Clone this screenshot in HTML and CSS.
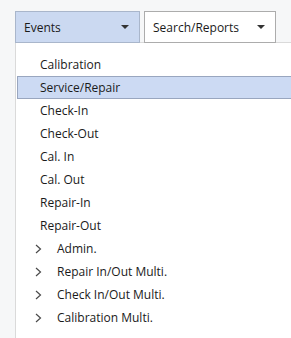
FILE: index.html
```html
<!DOCTYPE html>
<html lang="en">
<head>
    <meta charset="UTF-8">
    <title>Events Menu</title>
    <link rel="stylesheet" href="styles.css">
</head>
<body>
<div class="toolbar">
    <div class="drop drop-active">
        <span>Events</span>
        <span class="caret"></span>
    </div>
    <div class="drop drop-search">
        <span>Search/Reports</span>
        <span class="caret"></span>
    </div>
</div>
<div class="panel">
    <ul class="menu">
        <li class="item">Calibration</li>
        <li class="item selected">Service/Repair</li>
        <li class="item">Check-In</li>
        <li class="item">Check-Out</li>
        <li class="item">Cal. In</li>
        <li class="item">Cal. Out</li>
        <li class="item">Repair-In</li>
        <li class="item">Repair-Out</li>
        <li class="item group"><svg class="chev" width="7" height="10" viewBox="0 0 7 10"><polyline points="1,1 5.5,5 1,9" fill="none" stroke="#4a4a4a" stroke-width="1.2"/></svg>Admin.</li>
        <li class="item group"><svg class="chev" width="7" height="10" viewBox="0 0 7 10"><polyline points="1,1 5.5,5 1,9" fill="none" stroke="#4a4a4a" stroke-width="1.2"/></svg>Repair In/Out Multi.</li>
        <li class="item group"><svg class="chev" width="7" height="10" viewBox="0 0 7 10"><polyline points="1,1 5.5,5 1,9" fill="none" stroke="#4a4a4a" stroke-width="1.2"/></svg>Check In/Out Multi.</li>
        <li class="item group"><svg class="chev" width="7" height="10" viewBox="0 0 7 10"><polyline points="1,1 5.5,5 1,9" fill="none" stroke="#4a4a4a" stroke-width="1.2"/></svg>Calibration Multi.</li>
    </ul>
</div>
</body>
</html>
```

FILE: styles.css
```css
body, html {
    margin: 0;
    padding: 0;
    height: 100%;
    font-family: "Open Sans", "Noto Sans", sans-serif;
    font-size: 12px;
    color: #1a1a1a;
    background-color: #f6f7f8;
    overflow: hidden;
}

.toolbar {
    display: flex;
    gap: 4px;
    padding: 11px 0 0 15px;
    position: relative;
    z-index: 1;
    margin-bottom: -1px;
}

.drop {
    box-sizing: border-box;
    height: 32px;
    display: flex;
    align-items: center;
    justify-content: space-between;
    padding: 0 10px 0 8px;
    border: 1px solid #acacac;
    background-color: #fff;
}

.drop-active {
    width: 125px;
    background-color: #cbd9f1;
    border-color: #a9b6cb;
}

.drop-search {
    width: 132px;
}

.caret {
    width: 0;
    height: 0;
    border-left: 4px solid transparent;
    border-right: 4px solid transparent;
    border-top: 4px solid #333;
}

.panel {
    box-sizing: border-box;
    margin-left: 15px;
    height: calc(100% - 42px);
    background-color: #fff;
    border-left: 1px solid #dadada;
    border-top: 1px solid #dadada;
}

.menu {
    list-style: none;
    margin: 0;
    padding: 10px 0 0 1px;
}

.item {
    box-sizing: border-box;
    height: 23px;
    line-height: 21px;
    padding-left: 22px;
    border: 1px solid transparent;
    white-space: nowrap;
}

.selected {
    background-color: #ccdaf3;
    border-color: #99a6bf;
    border-right: none;
}

.group {
    display: flex;
    align-items: center;
    padding-left: 17px;
}

.chev {
    margin-right: 15px;
}
```
